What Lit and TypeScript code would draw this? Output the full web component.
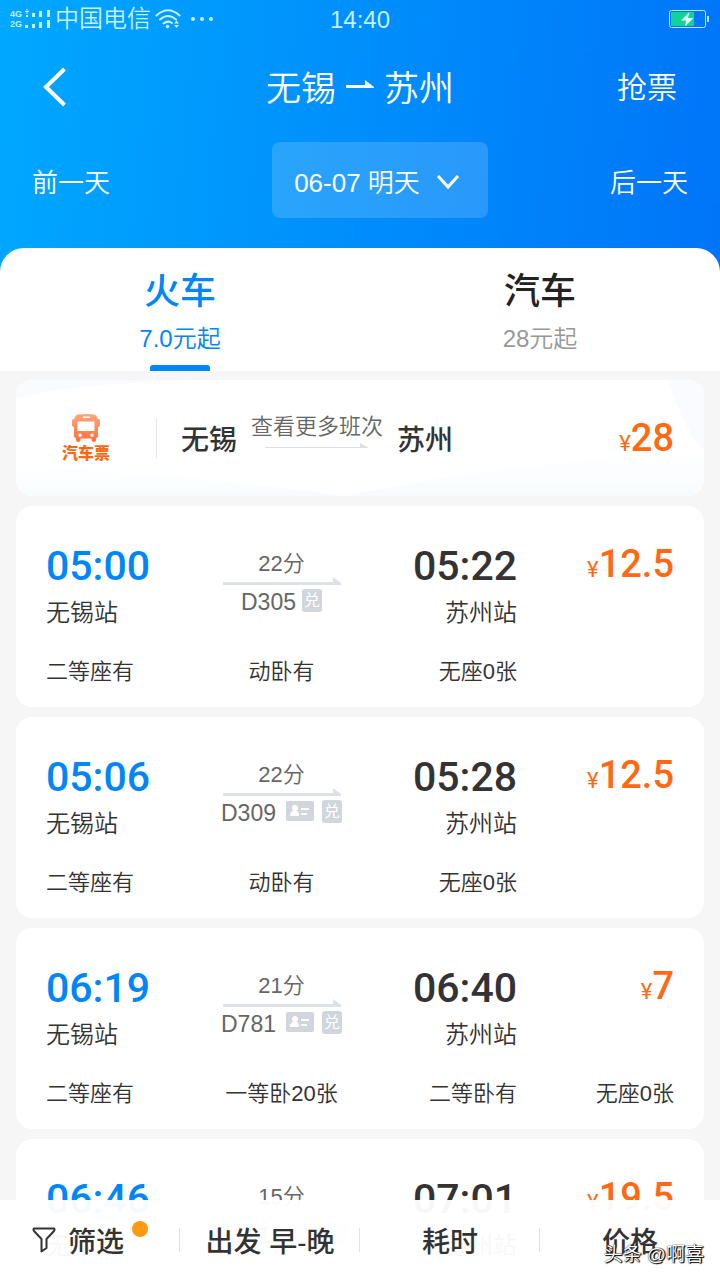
import { LitElement, html, css, svg, nothing } from "lit";
import { customElement, property, state } from "lit/decorators.js";
import { classMap } from "lit/directives/class-map.js";

interface Trip {
  depart: string;
  arrive: string;
  from: string;
  to: string;
  minutes: number;
  code: string;
  idCard: boolean;
  price: string;
  seats: string[];
}

const TRIPS: Trip[] = [
  { depart: "05:00", arrive: "05:22", from: "无锡站", to: "苏州站", minutes: 22, code: "D305", idCard: false, price: "12.5", seats: ["二等座有", "动卧有", "无座0张"] },
  { depart: "05:06", arrive: "05:28", from: "无锡站", to: "苏州站", minutes: 22, code: "D309", idCard: true, price: "12.5", seats: ["二等座有", "动卧有", "无座0张"] },
  { depart: "06:19", arrive: "06:40", from: "无锡站", to: "苏州站", minutes: 21, code: "D781", idCard: true, price: "7", seats: ["二等座有", "一等卧20张", "二等卧有", "无座0张"] },
  { depart: "06:46", arrive: "07:01", from: "无锡站", to: "苏州站", minutes: 15, code: "G7211", idCard: true, price: "19.5", seats: [] },
];

@customElement("status-bar")
export class StatusBar extends LitElement {
  static styles = css`
    :host {
      display: grid;
      grid-template-columns: 1fr auto 1fr;
      align-items: center;
      height: 38px;
      padding: 0 10px;
      color: #c4f0ff;
      font-size: 24px;
      line-height: 36px;
    }
    .left {
      display: flex;
      align-items: center;
    }
    .net {
      font: 700 9px/10px "Liberation Sans", sans-serif;
      width: 15px;
    }
    .bars {
      width: 26px;
      height: 20px;
      margin-right: 4px;
    }
    .wifi {
      width: 26px;
      height: 20px;
      margin: 0 10px 0 4px;
    }
    .dots {
      width: 22px;
      height: 4px;
    }
    .time {
      padding-top: 2px;
    }
    .battery {
      justify-self: end;
      width: 41px;
      height: 18px;
    }
    svg {
      display: block;
      fill: currentColor;
    }
  `;
  render() {
    return html`
      <div class="left">
        <div class="net">4G<br />2G</div>
        <svg class="bars" viewBox="0 0 26 20">
          <path d="M0 2h4v1H0zM1.5 0h1v5h-1zM1 6h2v2H1zM7 4h3v4H7zM14 2h3v6h-3zM22 1h3v7h-3zM0 16h3v3H0zM7 15h3v4H7zM14 13h3v6h-3zM22 11h3v8h-3z" />
        </svg>
        <span>中国电信</span>
        <svg class="wifi" viewBox="0 0 26 20">
          <g fill="none" stroke="currentColor" stroke-width="2" stroke-linecap="round">
            <path d="M1.5 6.5Q13-4 24.5 6.5M5 10.5Q13 3.5 21 10.5M8.5 14.5Q13 11 17 14" />
          </g>
          <circle cx="12.5" cy="17.5" r="1.8" />
          <path d="M19 14.5l2.5-3 2.5 3zM19 16l2.5 3 2.5-3z" />
        </svg>
        <svg class="dots" viewBox="0 0 22 4">
          <circle cx="2" cy="2" r="2" /><circle cx="11" cy="2" r="2" /><circle cx="20" cy="2" r="2" />
        </svg>
      </div>
      <span class="time">14:40</span>
      <svg class="battery" viewBox="0 0 41 18">
        <rect x="0.5" y="0.5" width="36" height="17" rx="2" fill="none" stroke="#bfe6ff" />
        <rect x="2" y="2" width="23" height="14" fill="#12d29a" />
        <path d="M20.5 2L12 10.5h5L16 16.5 24.5 8h-5.5z" fill="#d8fff2" />
        <rect x="38" y="6" width="2" height="6" fill="#bfe6ff" />
      </svg>
    `;
  }
}

@customElement("trip-card")
export class TripCard extends LitElement {
  @property({ attribute: false }) trip!: Trip;

  static styles = css`
    :host {
      display: block;
      background: #fff;
      border-radius: 16px;
      padding: 36px 30px 19px;
    }
    .grid {
      display: grid;
      grid-template-columns: repeat(4, 1fr);
    }
    .end {
      text-align: right;
    }
    .time {
      font-family: Roboto, sans-serif;
      font-size: 41px;
      line-height: 48px;
      font-weight: 500;
      color: #333;
    }
    .depart {
      color: #0086f6;
    }
    .station {
      font-size: 24px;
      line-height: 46px;
      color: #333;
    }
    .middle {
      display: flex;
      flex-direction: column;
      align-items: center;
      padding-top: 8px;
      color: #666;
    }
    .duration {
      font-size: 22px;
      line-height: 27px;
    }
    .arrow {
      display: block;
      width: 118px;
      height: 8px;
      fill: #dde1e8;
    }
    .meta {
      display: flex;
      align-items: center;
      gap: 6px;
      font-size: 23px;
      line-height: 34px;
    }
    .tags {
      display: flex;
      align-items: center;
      gap: 8px;
      padding-bottom: 4px;
    }
    .id {
      width: 28px;
      height: 20px;
      margin-left: 4px;
    }
    .swap {
      width: 20px;
      height: 23px;
      border-radius: 3px;
      background: #d0d6dc;
      color: #fff;
      font-size: 16px;
      line-height: 23px;
      text-align: center;
      font-weight: 400;
    }
    .price {
      font-family: Roboto, sans-serif;
      font-size: 38px;
      line-height: 44px;
      font-weight: 500;
      color: #ff6913;
      text-align: right;
    }
    .yen {
      font-size: 22px;
      font-weight: 400;
    }
    .seats {
      margin-top: 20px;
      min-height: 32px;
      font-size: 22px;
      line-height: 32px;
      color: #333;
    }
    .seats span:nth-child(2) {
      text-align: center;
    }
    .seats span:nth-child(n + 3) {
      text-align: right;
    }
  `;

  render() {
    const t = this.trip;
    return html`
      <div class="grid">
        <div>
          <div class="time depart">${t.depart}</div>
          <div class="station">${t.from}</div>
        </div>
        <div class="middle">
          <div class="duration">${t.minutes}分</div>
          <svg class="arrow" viewBox="0 0 118 8"><path d="M0 5h110V0l8 6v2H0z" /></svg>
          <div class="meta">
            <span>${t.code}</span>
            <span class="tags">
              ${t.idCard
                ? html`<svg class="id" viewBox="0 0 28 20">
                    <rect width="28" height="20" rx="2" fill="#d0d6dc" />
                    <g fill="#fff">
                      <circle cx="9" cy="7" r="3" />
                      <path d="M4 15c0-4 2-5.5 5-5.5s4 1.5 4 5.5zM15 7h8v2h-8zM15 12h6v2h-6z" />
                    </g>
                  </svg>`
                : nothing}
              <span class="swap">兑</span>
            </span>
          </div>
        </div>
        <div class="end">
          <div class="time">${t.arrive}</div>
          <div class="station">${t.to}</div>
        </div>
        <div class="price"><span class="yen">¥</span>${t.price}</div>
      </div>
      <div class="grid seats">${t.seats.map((s) => html`<span>${s}</span>`)}</div>
    `;
  }
}

@customElement("app-root")
export class AppRoot extends LitElement {
  @state() private tab = 0;

  static styles = css`
    :host {
      display: flex;
      flex-direction: column;
      position: relative;
      height: 100vh;
      overflow: hidden;
      background: #f6f6f6;
      font-family: "Liberation Sans", "Noto Sans CJK SC", sans-serif;
      font-weight: 350;
    }
    button {
      border: 0;
      padding: 0;
      margin: 0;
      background: none;
      font: inherit;
      color: inherit;
      cursor: pointer;
    }
    svg {
      display: block;
    }
    .top {
      flex: none;
      background: linear-gradient(95deg, #00a8ff, #0074f8);
      color: #fff;
    }
    .nav,
    .days {
      display: grid;
      align-items: center;
    }
    .nav {
      grid-template-columns: 1fr auto 1fr;
      height: 98px;
      padding: 0 43px;
    }
    .back svg {
      width: 24px;
      height: 40px;
    }
    .title {
      display: flex;
      align-items: center;
      gap: 10px;
      margin: 0;
      padding-top: 4px;
      font-size: 35px;
      line-height: 48px;
      font-weight: inherit;
    }
    .title svg {
      width: 28px;
      height: 8px;
      margin-bottom: 10px;
    }
    .grab {
      justify-self: end;
      padding-top: 2px;
      font-size: 30px;
      line-height: 40px;
    }
    .days {
      grid-template-columns: 6fr auto 5fr;
      padding: 6px 32px 30px;
      font-size: 26px;
    }
    .prev {
      justify-self: start;
    }
    .next {
      justify-self: end;
    }
    .date {
      display: flex;
      align-items: center;
      justify-content: center;
      gap: 16px;
      height: 76px;
      padding: 0 28px 0 22px;
      border-radius: 8px;
      background: rgba(255, 255, 255, 0.16);
      white-space: nowrap;
    }
    .date svg {
      width: 24px;
      height: 16px;
      margin-top: 4px;
    }
    .tabs {
      display: grid;
      grid-template-columns: 1fr 1fr;
      background: #fff;
      border-radius: 24px 24px 0 0;
    }
    .tab {
      display: flex;
      flex-direction: column;
      align-items: center;
      padding-top: 20px;
      color: #222;
    }
    .tab strong {
      font-size: 36px;
      line-height: 48px;
      font-weight: 500;
    }
    .tab span {
      font-size: 24px;
      line-height: 46px;
      color: #999;
    }
    .tab::after {
      content: "";
      width: 60px;
      height: 6px;
      margin-top: 3px;
      border-radius: 3px 3px 0 0;
    }
    .tab.on,
    .tab.on span {
      color: #0086f6;
    }
    .tab.on::after {
      background: #0086f6;
    }
    .list {
      flex: 1;
      min-height: 0;
      overflow: hidden;
      display: flex;
      flex-direction: column;
      gap: 10px;
      padding: 9px 16px 0;
    }
    .list > * {
      flex: none;
    }
    .bus {
      position: relative;
      display: flex;
      align-items: center;
      height: 116px;
      padding: 0 30px 0 46px;
      border-radius: 16px;
      overflow: hidden;
      background: #fff;
      color: #333;
      text-decoration: none;
    }
    .wash {
      position: absolute;
      inset: 0;
      width: 100%;
      height: 100%;
    }
    .bus > :not(.wash) {
      position: relative;
    }
    .logo {
      display: flex;
      flex-direction: column;
      align-items: center;
      gap: 2px;
      padding: 2px 46px 0 0;
      font-size: 16px;
      line-height: 20px;
      font-weight: 900;
      color: #ff6913;
    }
    .logo svg {
      width: 28px;
      height: 28px;
    }
    .rule {
      width: 1px;
      height: 40px;
      margin-right: 24px;
      background: #e4e6ea;
    }
    .city {
      font-size: 28px;
      line-height: 40px;
      font-weight: 500;
      padding-top: 6px;
    }
    .more {
      display: flex;
      flex-direction: column;
      align-items: center;
      margin: 0 14px;
      padding-bottom: 16px;
      font-size: 22px;
      line-height: 32px;
      color: #666;
    }
    .more svg {
      width: 104px;
      height: 6px;
    }
    .price {
      margin-left: auto;
      padding-top: 6px;
      font-family: Roboto, sans-serif;
      font-size: 38px;
      line-height: 44px;
      font-weight: 500;
      color: #ff6913;
    }
    .yen {
      font-size: 22px;
      font-weight: 400;
    }
    .toolbar {
      position: absolute;
      left: 0;
      right: 0;
      bottom: 0;
      display: grid;
      grid-template-columns: repeat(4, 1fr);
      height: 80px;
      background: rgba(255, 255, 255, 0.96);
      color: #333;
      font-size: 28px;
      font-weight: 500;
    }
    .toolbar button {
      display: flex;
      align-items: center;
      justify-content: center;
      background: linear-gradient(#e4e4e4, #e4e4e4) right center / 1px 24px no-repeat;
    }
    .toolbar button:last-child {
      background: none;
    }
    .funnel {
      width: 24px;
      height: 26px;
      margin-right: 12px;
    }
    .dot {
      width: 16px;
      height: 16px;
      margin: 0 0 22px 8px;
      border-radius: 8px;
      background: #ff9a14;
    }
    .mark {
      position: absolute;
      right: 16px;
      bottom: 11px;
      font-size: 19px;
      line-height: 28px;
      font-weight: 400;
      color: #fff;
      text-shadow: 1px 1px 1px #000, 1px 0 1px #000, 0 0 1px #000;
      pointer-events: none;
    }
  `;

  private renderTab(index: number, name: string, price: string) {
    const on = this.tab === index;
    return html`<button
      role="tab"
      aria-selected=${on}
      class=${classMap({ tab: true, on })}
      @click=${() => (this.tab = index)}
    >
      <strong>${name}</strong><span>${price}</span>
    </button>`;
  }

  private busIcon() {
    return svg`<svg viewBox="0 0 28 28" aria-hidden="true">
      <defs>
        <linearGradient id="bus" x1="0" y1="0" x2="0" y2="1">
          <stop offset="0" stop-color="#ffa67c" /><stop offset="1" stop-color="#ff6f3c" />
        </linearGradient>
      </defs>
      <path fill="url(#bus)" fill-rule="evenodd" d="M6 0.5Q14-0.5 22 0.5Q25 1 25.5 5H26.5Q28 5 28 7V11Q28 13 26 13V22Q26 24 24 24V26Q24 28 22 28Q19.5 28 19.5 26V24.5H8.5V26Q8.5 28 6.5 28Q4 28 4 26V24Q2 24 2 22V13Q0 13 0 11V7Q0 5 1.5 5H2.5Q3 1 6 0.5ZM11 2.5V4H18V2.5ZM5.5 7.5V17H22.5V7.5ZM8 19.5A1.7 1.7 0 1 0 8 23A1.7 1.7 0 1 0 8 19.5ZM20 19.5A1.7 1.7 0 1 0 20 23A1.7 1.7 0 1 0 20 19.5Z" />
    </svg>`;
  }

  render() {
    return html`
      <header class="top">
        <status-bar></status-bar>
        <div class="nav">
          <button class="back" aria-label="返回">
            <svg viewBox="0 0 24 40" fill="none" stroke="#fff" stroke-width="4">
              <path d="M21.5 2L3 20l18.5 18" />
            </svg>
          </button>
          <h1 class="title">
            无锡
            <svg viewBox="0 0 28 8" fill="#fff"><path d="M0 5h19V0l9 7v1H0z" /></svg>
            苏州
          </h1>
          <button class="grab">抢票</button>
        </div>
        <div class="days">
          <button class="prev">前一天</button>
          <button class="date">
            <span>06-07 明天</span>
            <svg viewBox="0 0 24 16" fill="none" stroke="#fff" stroke-width="3">
              <path d="M2 2l10 11L22 2" />
            </svg>
          </button>
          <button class="next">后一天</button>
        </div>
        <div class="tabs" role="tablist">
          ${this.renderTab(0, "火车", "7.0元起")} ${this.renderTab(1, "汽车", "28元起")}
        </div>
      </header>
      <main class="list">
        <a class="bus" href="#bus">
          <svg class="wash" viewBox="0 0 688 116" preserveAspectRatio="none">
            <defs>
              <linearGradient id="low" x1="0" y1="0" x2="0" y2="1">
                <stop offset="0" stop-color="#fff" /><stop offset="1" stop-color="#f8fbfe" />
              </linearGradient>
            </defs>
            <path d="M0 0H170Q60 4 0 18z" fill="#fafbfe" />
            <path d="M0 84Q180 96 330 116H0z" fill="url(#low)" />
            <path d="M330 116Q480 84 688 70V116z" fill="url(#low)" />
            <path d="M652 0H688V70Q668 50 652 0z" fill="#fafbfe" />
          </svg>
          <span class="logo">${this.busIcon()}汽车票</span>
          <span class="rule"></span>
          <span class="city">无锡</span>
          <span class="more">
            查看更多班次
            <svg viewBox="0 0 104 6" fill="#dcdfe6"><path d="M0 4h95V0l9 5H0z" /></svg>
          </span>
          <span class="city">苏州</span>
          <span class="price"><span class="yen">¥</span>28</span>
        </a>
        ${TRIPS.map((t) => html`<trip-card .trip=${t}></trip-card>`)}
      </main>
      <nav class="toolbar">
        <button>
          <svg class="funnel" viewBox="0 0 24 26" fill="none" stroke="#333" stroke-width="2" stroke-linejoin="round">
            <path d="M2 1.5H22Q23 2.5 22 4L14.5 12V21L9.5 24.5V12L2 4Q1 2.5 2 1.5z" />
          </svg>
          筛选<span class="dot"></span>
        </button>
        <button>出发 早-晚</button>
        <button>耗时</button>
        <button>价格</button>
      </nav>
      <div class="mark">头条 @啊喜</div>
    `;
  }
}
